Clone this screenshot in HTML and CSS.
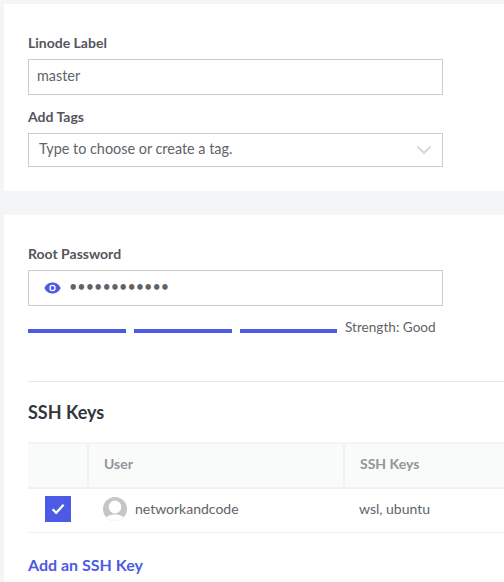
FILE: index.html
```html
<!DOCTYPE html>
<html lang="en">

<head>
    <meta charset="UTF-8" />
    <meta name="viewport" content="width=device-width, initial-scale=1.0" />
    <title>Create Linode</title>
    <link rel="stylesheet" href="styles.css">
</head>

<body>

    <section class="panel panel-label">
        <label class="field-label" for="label">Linode Label</label>
        <input class="text-input" id="label" value="master">

        <label class="field-label tags-label" for="tags">Add Tags</label>
        <div class="select-box">
            <input class="select-input" id="tags" placeholder="Type to choose or create a tag.">
            <svg class="chevron" width="16" height="10" viewBox="0 0 16 10">
                <path d="M1.5 1.5 L8 8 L14.5 1.5" fill="none" stroke="#d6d8da" stroke-width="2" />
            </svg>
        </div>
    </section>

    <section class="panel panel-access">
        <label class="field-label" for="password">Root Password</label>
        <div class="password-box">
            <svg class="eye" width="17" height="12" viewBox="0 0 17 12">
                <path d="M8.5 0.5 C4.8 0.5 1.8 2.7 0.4 6 C1.8 9.3 4.8 11.5 8.5 11.5 C12.2 11.5 15.2 9.3 16.6 6 C15.2 2.7 12.2 0.5 8.5 0.5 Z" fill="#4d5ae5" />
                <circle cx="8.5" cy="6" r="3.2" fill="#fff" />
                <circle cx="8.5" cy="6" r="1.9" fill="#4d5ae5" />
            </svg>
            <input class="password-input" id="password" type="password" value="abcdefghijkl">
        </div>

        <div class="strength">
            <div class="bars">
                <span class="bar"></span>
                <span class="bar"></span>
                <span class="bar"></span>
            </div>
            <span class="strength-text">Strength: Good</span>
        </div>

        <hr class="divider">

        <h2 class="section-title">SSH Keys</h2>

        <table class="ssh-table">
            <thead>
                <tr>
                    <th class="col-check"></th>
                    <th class="col-user">User</th>
                    <th>SSH Keys</th>
                </tr>
            </thead>
            <tbody>
                <tr>
                    <td class="col-check">
                        <span class="checkbox">
                            <svg width="14" height="12" viewBox="0 0 14 12">
                                <path d="M1.6 6.2 L5.2 9.8 L12.6 1.8" fill="none" stroke="#fff" stroke-width="2.3" />
                            </svg>
                        </span>
                    </td>
                    <td class="col-user">
                        <div class="user-cell">
                            <svg class="avatar" width="24" height="24" viewBox="0 0 24 24">
                                <defs>
                                    <clipPath id="avatar-clip">
                                        <circle cx="12" cy="12" r="12" />
                                    </clipPath>
                                </defs>
                                <circle cx="12" cy="12" r="12" fill="#c6c6c6" />
                                <g clip-path="url(#avatar-clip)" fill="#fff">
                                    <ellipse cx="12" cy="10" rx="6.2" ry="6.4" />
                                    <path d="M1 24 C2 19 8 17.5 12 17.5 C16 17.5 22 19 23 24 Z" />
                                </g>
                            </svg>
                            networkandcode
                        </div>
                    </td>
                    <td>wsl, ubuntu</td>
                </tr>
            </tbody>
        </table>

        <a class="add-key" href="#">Add an SSH Key</a>
    </section>

</body>

</html>
```

FILE: styles.css
```css
* {
    margin: 0;
    padding: 0;
    box-sizing: border-box;
}

body {
    font-family: Lato, 'Liberation Sans', sans-serif;
    background: #f4f5f6;
    color: #606469;
    height: 582px;
    overflow: hidden;
    padding: 4px 0 0 4px;
}

.panel {
    background: #fff;
    padding-left: 24px;
}

.panel-label {
    height: 187px;
    padding-top: 30px;
    margin-bottom: 24px;
}

.panel-access {
    padding-top: 30px;
    height: 367px;
}

.field-label {
    display: block;
    font-size: 14px;
    font-weight: 700;
    line-height: 18px;
    color: #55565c;
    margin-bottom: 7px;
}

.tags-label {
    margin-top: 13px;
}

.text-input,
.select-box,
.password-box {
    display: flex;
    align-items: center;
    width: 415px;
    height: 36px;
    border: 1px solid #ccc;
    background: #fff;
    font-family: inherit;
    font-size: 14.4px;
    color: #606469;
}

.text-input {
    padding: 0 8px 4px;
    outline: none;
}

.select-box {
    height: 34px;
    padding: 0 10px;
    justify-content: space-between;
}

.select-input {
    flex: 1;
    border: none;
    outline: none;
    font-family: inherit;
    font-size: 14.4px;
    color: #606469;
    padding-bottom: 3px;
}

.select-input::placeholder {
    color: #606469;
    opacity: 1;
}

.password-box {
    padding-left: 15px;
}

.eye {
    margin-right: 8px;
}

.password-input {
    flex: 1;
    border: none;
    outline: none;
    font-family: inherit;
    font-size: 14.4px;
    color: #606469;
    padding-bottom: 3px;
}

.strength {
    display: flex;
    align-items: flex-start;
    gap: 8px;
    margin-top: 13px;
}

.bars {
    display: flex;
    gap: 8px;
    margin-top: 10px;
}

.bar {
    width: 98px;
    height: 4px;
    background: #4d5ae5;
}

.bar:last-child {
    width: 97px;
}

.strength-text {
    font-size: 13.6px;
    line-height: 16px;
    color: #606469;
}

.divider {
    border: none;
    border-top: 1px solid #e6e6e6;
    margin: 46px 0 18px 0;
}

.section-title {
    font-size: 18px;
    font-weight: 700;
    line-height: 24px;
    color: #32363c;
    margin-bottom: 18px;
}

.ssh-table {
    width: 476px;
    border-collapse: collapse;
    table-layout: fixed;
    font-size: 14px;
}

.ssh-table th {
    height: 45px;
    background: #f9fafa;
    border-top: 2px solid #f4f5f5;
    border-bottom: 2px solid #f0f1f1;
    border-left: 2px solid #f0f1f1;
    text-align: left;
    padding: 0 0 4px 15px;
    font-size: 14px;
    font-weight: 700;
    color: #909699;
}

.ssh-table th.col-check {
    border-left: none;
}

.ssh-table td {
    height: 44px;
    border-bottom: 1px solid #f0f1f1;
    padding: 0 0 4px 15px;
}

.ssh-table .col-check {
    width: 60px;
    padding-left: 0;
}

.ssh-table .col-user {
    width: 256px;
}

.checkbox {
    display: flex;
    justify-content: center;
    align-items: center;
    width: 26px;
    height: 26px;
    margin: 2px 0 0 17px;
    background: #4d5ae5;
}

.user-cell {
    display: flex;
    align-items: center;
    gap: 8px;
}

.avatar {
    flex-shrink: 0;
    margin-top: 2px;
}

.add-key {
    display: block;
    margin-top: 22px;
    font-size: 16px;
    font-weight: 700;
    color: #4d5ae5;
    text-decoration: none;
}
```
